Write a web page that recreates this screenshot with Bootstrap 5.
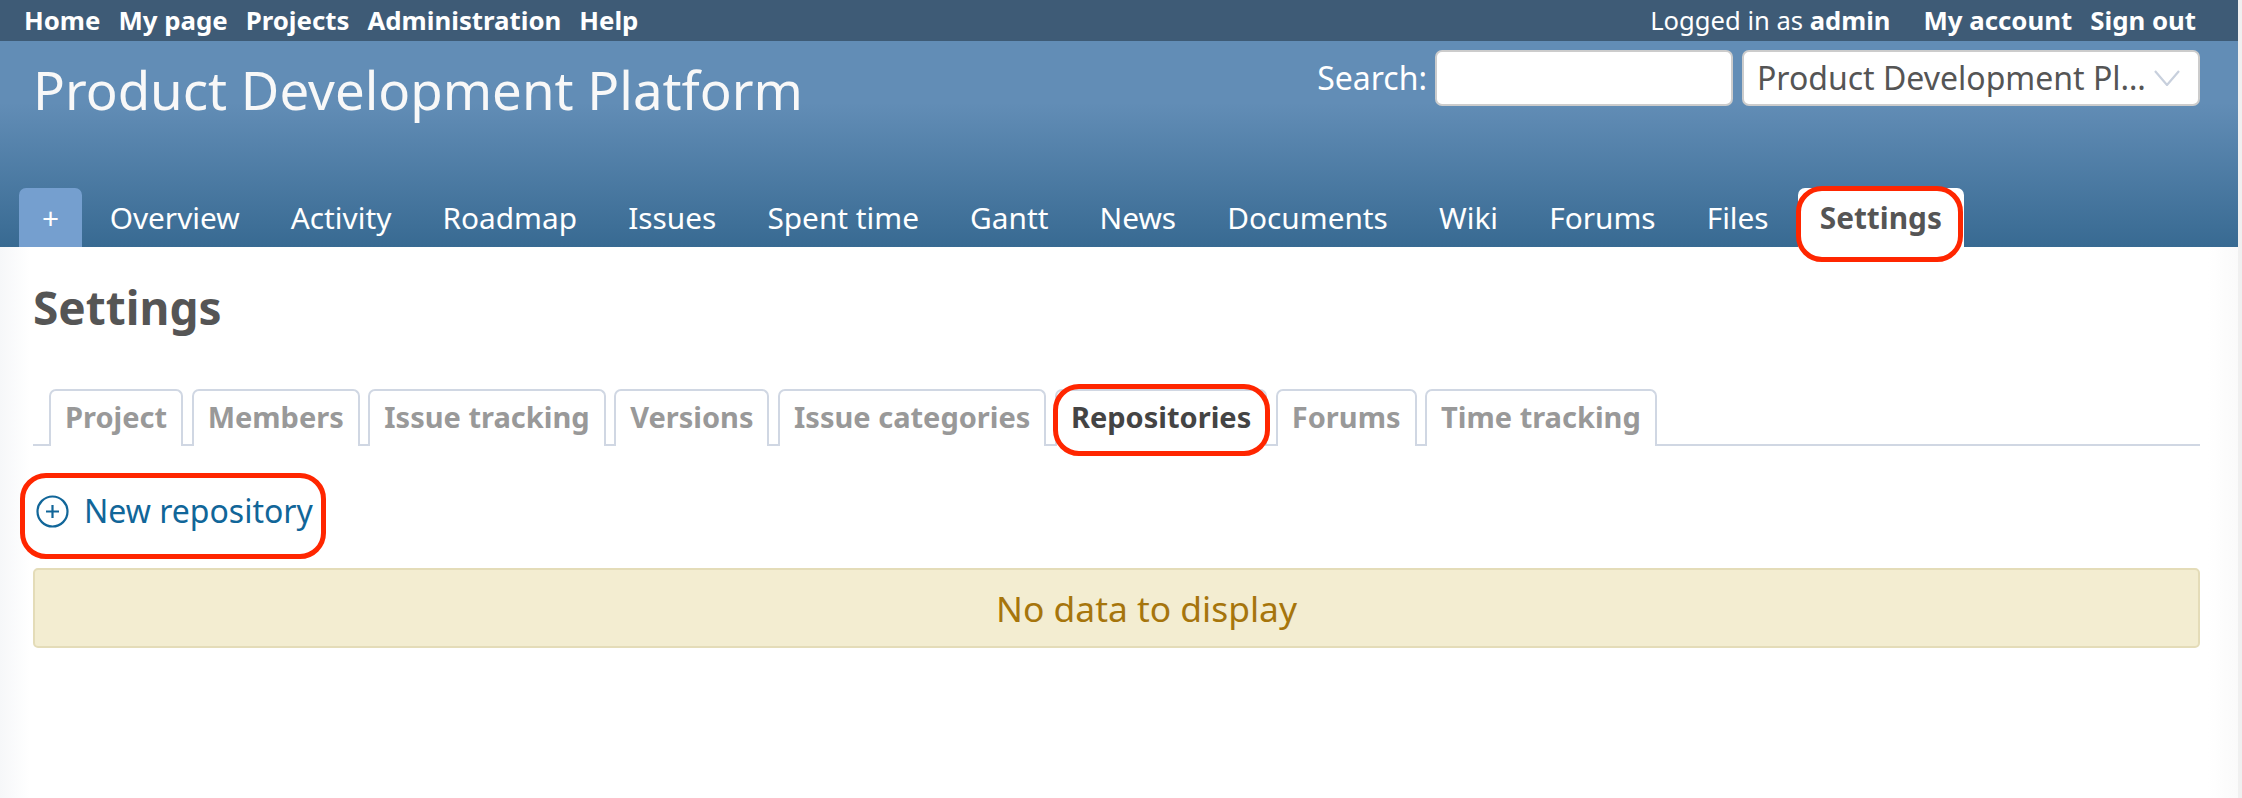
<!DOCTYPE html>
<html lang="en"><head><meta charset="utf-8"><title>Settings</title>
<link rel="stylesheet" href="https://cdn.jsdelivr.net/npm/bootstrap@5.3.0/dist/css/bootstrap.min.css">
<style>
html,body{height:100%;margin:0}
body{font-family:"Noto Sans",sans-serif;color:#555;background:#f0f0f0;overflow:hidden}
a{text-decoration:none}
.page-shell{width:2238px}
.top-strip{height:41px;background:#3e5b76;padding:0 42px 0 24px;font-size:25.8px;font-weight:700;line-height:41px}
.top-strip a{color:#fff}
.top-strip .top-links{gap:18px}
.top-strip .login{font-weight:400;color:#fff;margin-right:15px;font-size:25.6px}
.top-strip .login b{font-weight:700}
.head-band{height:206px;background:linear-gradient(180deg,#628db6 0,#628db6 30%,#386a92 100%);padding:9px 38px 0 33px}
.site-title{font-size:52.8px;font-weight:400;color:#f8f8f8;line-height:70px;margin:5px 0 0}
.search-form{gap:9px;color:#fff;font-size:32px}
.search-form label{margin-right:-1px}
.search-box{width:298px;height:56px;border:2px solid #ccc;border-radius:7px;background:#fff;padding:0 12px;outline:0}
.scope-select{width:458px;height:56px;border:2px solid #ccc;border-radius:7px;font-size:32px;color:#555;padding:0 48px 0 13px;background-image:url("data:image/svg+xml,%3csvg xmlns='http://www.w3.org/2000/svg' viewBox='0 0 26 16'%3e%3cpath fill='none' stroke='%23c8d0dd' stroke-width='2.2' d='M1 1l12 14L25 1'/%3e%3c/svg%3e");background-size:26px 16px;background-position:right 18px center;text-overflow:ellipsis;font-family:"Noto Sans",sans-serif;line-height:1.2}
.main-tabs{margin-left:-14px;flex-wrap:nowrap;gap:7.15px}
.main-tabs .nav-link{height:59px;line-height:59px;padding:0 22px;font-size:29.8px;color:#fff;border-radius:7px 7px 0 0}
.main-tabs .nav-link.plus-tab{background:#759fcf;width:63px;padding:0;text-align:center;margin-right:-1.5px}
.main-tabs .nav-link.on{background:#fff;color:#555;font-weight:700}
.spot{position:relative;display:block}
.spot-ring{position:absolute;border:5px solid #ff2600;border-radius:26px;pointer-events:none}
.ring-main{left:-2px;top:-2px;width:167px;height:76px}
.ring-sub{left:-2px;top:-5px;width:217px;height:72px}
.ring-new{left:-16px;top:-21px;width:306px;height:86px}
.page-body{padding:0 38px 0 33px;height:551px;background:linear-gradient(90deg,#f6f7f9 0,#fff 30px,#fff calc(100% - 30px),#fafafa 100%)}
.page-title{font-size:46px;font-weight:700;color:#555;margin:0;line-height:63px;padding-top:29px}
.sub-tabs{margin-top:50px;height:57px;border-bottom:2px solid #d0d7e3;padding-left:16px;gap:8.6px;flex-wrap:nowrap}
.sub-tabs .nav-link{height:57px;line-height:52px;padding:0 14px;font-size:29px;font-weight:700;color:#999;background:#fff;border:2px solid #d0d7e3;border-bottom:0;border-radius:7px 7px 0 0}
.sub-tabs .nav-link.on{color:#444;border-color:#d0d7e3}
.add-row{margin-top:48px;height:34px;display:flex;align-items:center}
.add-link{color:#169;font-size:32px;display:flex;align-items:center;gap:15px;line-height:34px;margin-left:3px}
.empty-flash{margin-top:40px;height:80px;line-height:76px;background:#f3edd1;border:2px solid #e4dcb8;border-radius:5px;color:#a6750c;font-size:35.4px;text-align:center;padding-left:60px}
</style></head>
<body>
<div class="page-shell">
<div class="top-strip d-flex justify-content-between">
  <div class="d-flex top-links"><a href="#">Home</a><a href="#">My page</a><a href="#">Projects</a><a href="#">Administration</a><a href="#">Help</a></div>
  <div class="d-flex top-links"><span class="login">Logged in as <b>admin</b></span><a href="#">My account</a><a href="#">Sign out</a></div>
</div>
<header class="head-band d-flex flex-column">
  <div class="d-flex justify-content-between align-items-start">
    <h1 class="site-title">Product Development Platform</h1>
    <form class="search-form d-flex align-items-center">
      <label for="q">Search:</label>
      <input id="q" class="search-box" type="text">
      <select class="form-select scope-select" aria-label="Jump to project"><option>Product Development Platform</option></select>
    </form>
  </div>
  <ul class="nav main-tabs mt-auto">
    <li class="nav-item"><a class="nav-link plus-tab" href="#">+</a></li>
    <li class="nav-item"><a class="nav-link" href="#">Overview</a></li>
    <li class="nav-item"><a class="nav-link" href="#">Activity</a></li>
    <li class="nav-item"><a class="nav-link" href="#">Roadmap</a></li>
    <li class="nav-item"><a class="nav-link" href="#">Issues</a></li>
    <li class="nav-item"><a class="nav-link" href="#">Spent time</a></li>
    <li class="nav-item"><a class="nav-link" href="#">Gantt</a></li>
    <li class="nav-item"><a class="nav-link" href="#">News</a></li>
    <li class="nav-item"><a class="nav-link" href="#">Documents</a></li>
    <li class="nav-item"><a class="nav-link" href="#">Wiki</a></li>
    <li class="nav-item"><a class="nav-link" href="#">Forums</a></li>
    <li class="nav-item"><a class="nav-link" href="#">Files</a></li>
    <li class="nav-item spot"><a class="nav-link on" href="#">Settings</a><span class="spot-ring ring-main"></span></li>
  </ul>
</header>
<main class="page-body">
  <h2 class="page-title">Settings</h2>
  <ul class="nav sub-tabs">
    <li class="nav-item"><a class="nav-link" href="#">Project</a></li>
    <li class="nav-item"><a class="nav-link" href="#">Members</a></li>
    <li class="nav-item"><a class="nav-link" href="#">Issue tracking</a></li>
    <li class="nav-item"><a class="nav-link" href="#">Versions</a></li>
    <li class="nav-item"><a class="nav-link" href="#">Issue categories</a></li>
    <li class="nav-item spot"><a class="nav-link on" href="#">Repositories</a><span class="spot-ring ring-sub"></span></li>
    <li class="nav-item"><a class="nav-link" href="#">Forums</a></li>
    <li class="nav-item"><a class="nav-link" href="#">Time tracking</a></li>
  </ul>
  <div class="add-row">
    <a class="add-link spot" href="#">
      <svg width="33" height="33" viewBox="0 0 33 33" fill="none" stroke="#169" aria-hidden="true"><circle cx="16.5" cy="16.5" r="15" stroke-width="2.2"/><path d="M16.5 10v13M10 16.5h13" stroke-width="2.2"/></svg>
      <span>New repository</span>
      <span class="spot-ring ring-new"></span>
    </a>
  </div>
  <div class="empty-flash">No data to display</div>
</main>
</div>
</body></html>
